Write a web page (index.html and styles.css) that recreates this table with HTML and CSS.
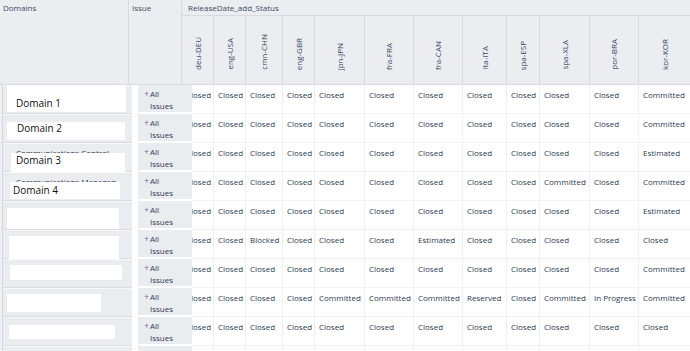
FILE: index.html
```html
<!DOCTYPE html>
<html>
<head>
<meta charset="utf-8">
<link rel="stylesheet" href="styles.css">
</head>
<body>
<div class="sheet">
  <div class="head">
    <div class="h-domains">Domains</div>
    <div class="h-issue">Issue</div>
    <div class="h-group">
      <div class="h-title">ReleaseDate_add_Status</div>
      <div class="h-cols">
        <div class="h-col"><span>deu-DEU</span></div>
        <div class="h-col"><span>eng-USA</span></div>
        <div class="h-col"><span>cmn-CHN</span></div>
        <div class="h-col"><span>eng-GBR</span></div>
        <div class="h-col"><span>jpn-JPN</span></div>
        <div class="h-col"><span>fra-FRA</span></div>
        <div class="h-col"><span>fra-CAN</span></div>
        <div class="h-col"><span>ita-ITA</span></div>
        <div class="h-col"><span>spa-ESP</span></div>
        <div class="h-col"><span>spa-XLA</span></div>
        <div class="h-col"><span>por-BRA</span></div>
        <div class="h-col"><span>kor-KOR</span></div>
      </div>
    </div>
  </div>

  <div class="rows">
    <div class="row">
      <div class="c-strip"></div>
      <div class="c-domain"><div class="mask m1">Domain 1</div></div>
      <div class="c-gap"></div>
      <div class="c-issue"><span class="plus">+</span><span class="link">All Issues</span></div>
      <div class="c clip"><span>Closed</span></div>
      <div class="c">Closed</div><div class="c">Closed</div><div class="c">Closed</div><div class="c">Closed</div><div class="c">Closed</div><div class="c">Closed</div><div class="c">Closed</div><div class="c">Closed</div><div class="c">Closed</div><div class="c">Closed</div><div class="c">Committed</div>
    </div>
    <div class="row">
      <div class="c-strip"></div>
      <div class="c-domain"><div class="mask m2">Domain 2</div></div>
      <div class="c-gap"></div>
      <div class="c-issue"><span class="plus">+</span><span class="link">All Issues</span></div>
      <div class="c clip"><span>Closed</span></div>
      <div class="c">Closed</div><div class="c">Closed</div><div class="c">Closed</div><div class="c">Closed</div><div class="c">Closed</div><div class="c">Closed</div><div class="c">Closed</div><div class="c">Closed</div><div class="c">Closed</div><div class="c">Closed</div><div class="c">Committed</div>
    </div>
    <div class="row">
      <div class="c-strip"></div>
      <div class="c-domain"><span class="dname">Communications Control</span><div class="mask m3">Domain 3</div></div>
      <div class="c-gap"></div>
      <div class="c-issue"><span class="plus">+</span><span class="link">All Issues</span></div>
      <div class="c clip"><span>Closed</span></div>
      <div class="c">Closed</div><div class="c">Closed</div><div class="c">Closed</div><div class="c">Closed</div><div class="c">Closed</div><div class="c">Closed</div><div class="c">Closed</div><div class="c">Closed</div><div class="c">Closed</div><div class="c">Closed</div><div class="c">Estimated</div>
    </div>
    <div class="row">
      <div class="c-strip"></div>
      <div class="c-domain"><span class="dname">Communications Management</span><div class="mask m4">Domain 4</div></div>
      <div class="c-gap"></div>
      <div class="c-issue"><span class="plus">+</span><span class="link">All Issues</span></div>
      <div class="c clip"><span>Closed</span></div>
      <div class="c">Closed</div><div class="c">Closed</div><div class="c">Closed</div><div class="c">Closed</div><div class="c">Closed</div><div class="c">Closed</div><div class="c">Closed</div><div class="c">Closed</div><div class="c">Committed</div><div class="c">Closed</div><div class="c">Committed</div>
    </div>
    <div class="row">
      <div class="c-strip"></div>
      <div class="c-domain"><div class="mask m5"></div></div>
      <div class="c-gap"></div>
      <div class="c-issue"><span class="plus">+</span><span class="link">All Issues</span></div>
      <div class="c clip"><span>Closed</span></div>
      <div class="c">Closed</div><div class="c">Closed</div><div class="c">Closed</div><div class="c">Closed</div><div class="c">Closed</div><div class="c">Closed</div><div class="c">Closed</div><div class="c">Closed</div><div class="c">Closed</div><div class="c">Closed</div><div class="c">Estimated</div>
    </div>
    <div class="row">
      <div class="c-strip"></div>
      <div class="c-domain"><div class="mask m6"></div></div>
      <div class="c-gap"></div>
      <div class="c-issue"><span class="plus">+</span><span class="link">All Issues</span></div>
      <div class="c clip"><span>Closed</span></div>
      <div class="c">Closed</div><div class="c">Blocked</div><div class="c">Closed</div><div class="c">Closed</div><div class="c">Closed</div><div class="c">Estimated</div><div class="c">Closed</div><div class="c">Closed</div><div class="c">Closed</div><div class="c">Closed</div><div class="c">Closed</div>
    </div>
    <div class="row">
      <div class="c-strip"></div>
      <div class="c-domain"><div class="mask m7"></div></div>
      <div class="c-gap"></div>
      <div class="c-issue"><span class="plus">+</span><span class="link">All Issues</span></div>
      <div class="c clip"><span>Closed</span></div>
      <div class="c">Closed</div><div class="c">Closed</div><div class="c">Closed</div><div class="c">Closed</div><div class="c">Closed</div><div class="c">Closed</div><div class="c">Closed</div><div class="c">Closed</div><div class="c">Closed</div><div class="c">Closed</div><div class="c">Committed</div>
    </div>
    <div class="row">
      <div class="c-strip"></div>
      <div class="c-domain"><div class="mask m8"></div></div>
      <div class="c-gap"></div>
      <div class="c-issue"><span class="plus">+</span><span class="link">All Issues</span></div>
      <div class="c clip"><span>Closed</span></div>
      <div class="c">Closed</div><div class="c">Closed</div><div class="c">Closed</div><div class="c">Committed</div><div class="c">Committed</div><div class="c">Committed</div><div class="c">Reserved</div><div class="c">Closed</div><div class="c">Committed</div><div class="c">In Progress</div><div class="c">Committed</div>
    </div>
    <div class="row">
      <div class="c-strip"></div>
      <div class="c-domain"><div class="mask m9"></div></div>
      <div class="c-gap"></div>
      <div class="c-issue"><span class="plus">+</span><span class="link">All Issues</span></div>
      <div class="c clip"><span>Closed</span></div>
      <div class="c">Closed</div><div class="c">Closed</div><div class="c">Closed</div><div class="c">Closed</div><div class="c">Closed</div><div class="c">Closed</div><div class="c">Closed</div><div class="c">Closed</div><div class="c">Closed</div><div class="c">Closed</div><div class="c">Closed</div>
    </div>
    <div class="row">
      <div class="c-strip"></div>
      <div class="c-domain"></div>
      <div class="c-gap"></div>
      <div class="c-issue"></div>
      <div class="c clip"></div>
      <div class="c"></div><div class="c"></div><div class="c"></div><div class="c"></div><div class="c"></div><div class="c"></div><div class="c"></div><div class="c"></div><div class="c"></div><div class="c"></div><div class="c"></div>
    </div>
  </div>
</div>
</body>
</html>
```
FILE: styles.css
```css
html, body {
  margin: 0;
  padding: 0;
  background: #ffffff;
  overflow: hidden;
}

.sheet {
  width: 690px;
  height: 351px;
  overflow: hidden;
  font-family: "Open Sans", "Noto Sans", sans-serif;
  font-size: 8px;
  line-height: 12px;
  color: #2c3a52;
}

/* ---------- header ---------- */
.head {
  display: grid;
  grid-template-columns: 129px 53px 508px;
  height: 85px;
  background: #ebedf0;
  border-bottom: 1px solid #d7dae0;
  box-sizing: border-box;
}

.h-domains,
.h-issue {
  border-right: 1px solid #d7dae0;
  padding: 2px 0 0 3px;
  color: #3b4a63;
}

.h-group {
  display: flex;
  flex-direction: column;
}

.h-title {
  height: 16px;
  box-sizing: border-box;
  border-bottom: 1px solid #d7dae0;
  padding: 2px 0 0 6px;
  color: #3b4a63;
}

.h-cols {
  flex: 1;
  display: grid;
  grid-template-columns: 32px 32px 37px 32px 50px 49px 49px 44px 33px 50px 49px 51px;
}

.h-col {
  border-right: 1px solid #d7dae0;
  display: flex;
  justify-content: center;
  align-items: flex-end;
  padding-bottom: 14px;
}

.h-col:last-child {
  border-right: none;
}

.h-col span {
  writing-mode: vertical-rl;
  transform: rotate(180deg);
  color: #3b4a63;
  white-space: nowrap;
}

/* ---------- body rows ---------- */
.row {
  display: grid;
  grid-template-columns: 3px 129px 6px 54px 22px 32px 37px 32px 50px 49px 49px 44px 33px 50px 49px 51px;
  height: 29px;
}

.c-strip {
  background: #eef0f3;
  border-right: 1px solid #d3d6dc;
}

.c-domain {
  position: relative;
  background: #ebecf0;
  border-bottom: 1px solid #d9dce2;
  border-top: 1px solid #f7f8fa;
  box-sizing: border-box;
  padding: 3px 0 0 13px;
  color: #2c3a52;
}

.dname {
  display: block;
  max-width: 100px;
  white-space: nowrap;
  overflow: hidden;
}

.c-gap {
  background: #ffffff;
}

.c-issue {
  display: flex;
  align-items: flex-start;
  background: #ebecf0;
  border-bottom: 2px solid #ffffff;
  box-sizing: border-box;
  padding: 3px 0 0 6px;
}

.plus {
  color: #6b778c;
  font-size: 9px;
  width: 5px;
  margin-right: 1px;
}

.link {
  width: 28px;
  color: #2c3a52;
}

.c {
  border-right: 1px solid #eef0f3;
  border-bottom: 1px solid #f1f2f5;
  box-sizing: border-box;
  padding: 4px 0 0 4px;
  white-space: nowrap;
  overflow: hidden;
}

.c:last-child {
  border-right: none;
}

.c.clip {
  padding-left: 0;
}

.c.clip span {
  display: inline-block;
  margin-left: -6px;
}

/* ---------- redaction overlays ---------- */
.mask {
  position: absolute;
  background: #ffffff;
  color: #111111;
  font-size: 10px;
  line-height: 12px;
  white-space: nowrap;
  box-sizing: border-box;
}

.m1 { left: 4px; top: -1px; width: 119px; height: 27px; padding: 12px 0 0 9px; }
.m2 { left: 4px; top: 7px;  width: 118px; height: 18px; padding: 0 0 0 10px; }
.m3 { left: 8px; top: 9px;  width: 114px; height: 21px; padding: 1px 0 0 5px; }
.m4 { left: 7px; top: 9px;  width: 110px; height: 17px; padding: 2px 0 0 3px; }
.m5 { left: 4px; top: 6px;  width: 112px; height: 21px; }
.m6 { left: 6px; top: 5px;  width: 110px; height: 23px; }
.m7 { left: 7px; top: 5px;  width: 112px; height: 15px; }
.m8 { left: 4px; top: 5px;  width: 94px;  height: 18px; }
.m9 { left: 6px; top: 7px;  width: 106px; height: 14px; }
```
